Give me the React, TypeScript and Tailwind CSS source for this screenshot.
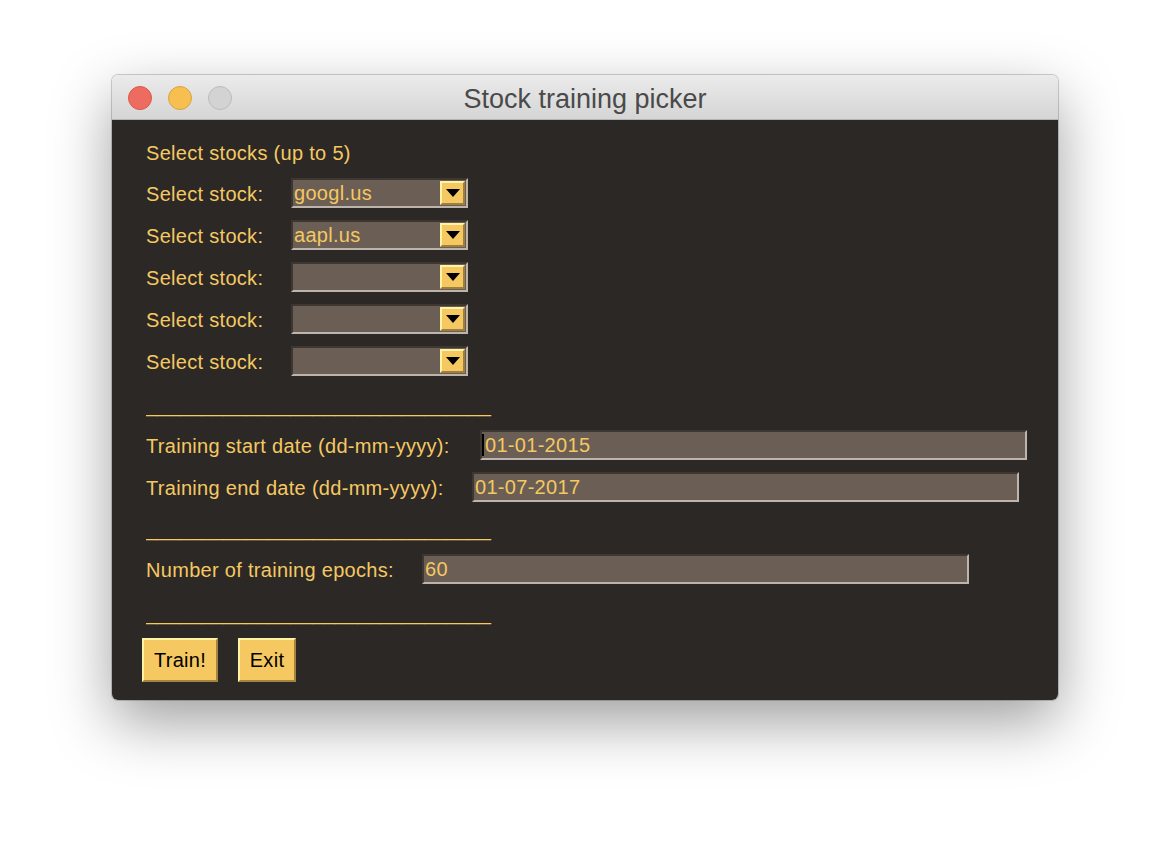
import React from "react";

const font = { fontFamily: '"Liberation Sans", Arial, Helvetica, sans-serif' };

function Combo({ value }: { value: string }) {
  return (
    <div className="flex h-[30px] w-[177px] items-stretch border-t-2 border-l-2 border-b-2 border-r-2 border-t-[#3e3631] border-l-[#3e3631] border-b-[#bdb5ad] border-r-[#bdb5ad] bg-[#6b5e54]">
      <div className="flex flex-1 items-center pl-[1px] text-[20px] leading-none tracking-[0.3px] text-[#f5c862]">{value}</div>
      <div className="my-[1px] mr-[1px] flex w-[25px] items-center justify-center border-t-2 border-l-2 border-b-2 border-r-2 border-t-[#fff3a6] border-l-[#fff3a6] border-b-[#9e7f3c] border-r-[#9e7f3c] bg-[#f5c862]">
        <svg width="14" height="8" viewBox="0 0 14 8">
          <polygon points="0,0 14,0 7,8" fill="#000" />
        </svg>
      </div>
    </div>
  );
}

function Entry({ value, cursor }: { value: string; cursor?: boolean }) {
  return (
    <div className="flex h-[30px] w-[547px] items-center border-t-2 border-l-2 border-b-2 border-r-2 border-t-[#3e3631] border-l-[#3e3631] border-b-[#bdb5ad] border-r-[#bdb5ad] bg-[#6b5e54] pl-[1px] text-[20px] leading-none tracking-[0.3px] text-[#f5c862]">
      {cursor && <span className="-ml-[1px] mr-[1px] inline-block h-[22px] w-[2px] bg-black" />}
      <span>{value}</span>
    </div>
  );
}

function Sep() {
  return (
    <div className="h-[26px] overflow-hidden whitespace-nowrap text-[20px] leading-[26px] text-[#f5c862]">
      {"_".repeat(31)}
    </div>
  );
}

function Btn({ label, w }: { label: string; w: string }) {
  return (
    <div
      className={`flex h-[44px] ${w} items-center justify-center border-t-2 border-l-2 border-b-2 border-r-2 border-t-[#fff3a6] border-l-[#fff3a6] border-b-[#a5843e] border-r-[#a5843e] bg-[#f5c862] text-[20px] leading-none tracking-[0.3px] text-black`}
    >
      {label}
    </div>
  );
}

const label = "h-[30px] leading-[33px] text-[20px] tracking-[0.3px] text-[#f5c862] whitespace-nowrap";

export default function App() {
  const stocks = ["googl.us", "aapl.us", "", "", ""];
  return (
    <div className="min-h-[848px] w-[1170px] bg-white pl-[112px] pt-[75px]" style={font}>
      <div className="w-[946px] overflow-hidden rounded-[6px] shadow-[0_22px_60px_rgba(0,0,0,0.38),0_0_0_1px_rgba(0,0,0,0.18)]">
        {/* title bar */}
        <div className="relative flex h-[45px] items-center border-b border-b-[#b4b4b4] bg-gradient-to-b from-[#ebebeb] to-[#d5d5d5]">
          <div className="absolute left-[16px] top-[11px] flex gap-[16px]">
            <div className="h-[24px] w-[24px] rounded-full border border-[#d9574d] bg-[#ee6b5f]" />
            <div className="h-[24px] w-[24px] rounded-full border border-[#d9a441] bg-[#f6bf4f]" />
            <div className="h-[24px] w-[24px] rounded-full border border-[#bcbcbc] bg-[#d3d3d3]" />
          </div>
          <div className="w-full pt-[5px] text-center text-[27px] leading-none text-[#4a4a4a]">Stock training picker</div>
        </div>
        {/* content */}
        <div className="flex h-[580px] flex-col bg-[#2c2826] pl-[34px] pt-[20px]">
          <div className="h-[26px] whitespace-nowrap text-[20px] leading-[26px] tracking-[0.3px] text-[#f5c862]">Select stocks (up to 5)</div>
          <div className="mt-[12px] flex flex-col gap-[12px]">
            {stocks.map((s, i) => (
              <div key={i} className="flex h-[30px] items-center">
                <div className={`w-[145px] ${label}`}>Select stock:</div>
                <Combo value={s} />
              </div>
            ))}
          </div>
          <div className="mt-[16px]">
            <Sep />
          </div>
          <div className="mt-[12px] flex flex-col gap-[12px]">
            <div className="flex h-[30px] items-center">
              <div className={`w-[334px] ${label}`}>Training start date (dd-mm-yyyy):</div>
              <Entry value="01-01-2015" cursor />
            </div>
            <div className="flex h-[30px] items-center">
              <div className={`w-[326px] ${label}`}>Training end date (dd-mm-yyyy):</div>
              <Entry value="01-07-2017" />
            </div>
          </div>
          <div className="mt-[14px]">
            <Sep />
          </div>
          <div className="mt-[12px] flex h-[30px] items-center">
            <div className={`w-[276px] ${label}`}>Number of training epochs:</div>
            <Entry value="60" />
          </div>
          <div className="mt-[16px]">
            <Sep />
          </div>
          <div className="-ml-[4px] mt-[12px] flex gap-[20px]">
            <Btn label="Train!" w="w-[76px]" />
            <Btn label="Exit" w="w-[58px]" />
          </div>
        </div>
      </div>
    </div>
  );
}
